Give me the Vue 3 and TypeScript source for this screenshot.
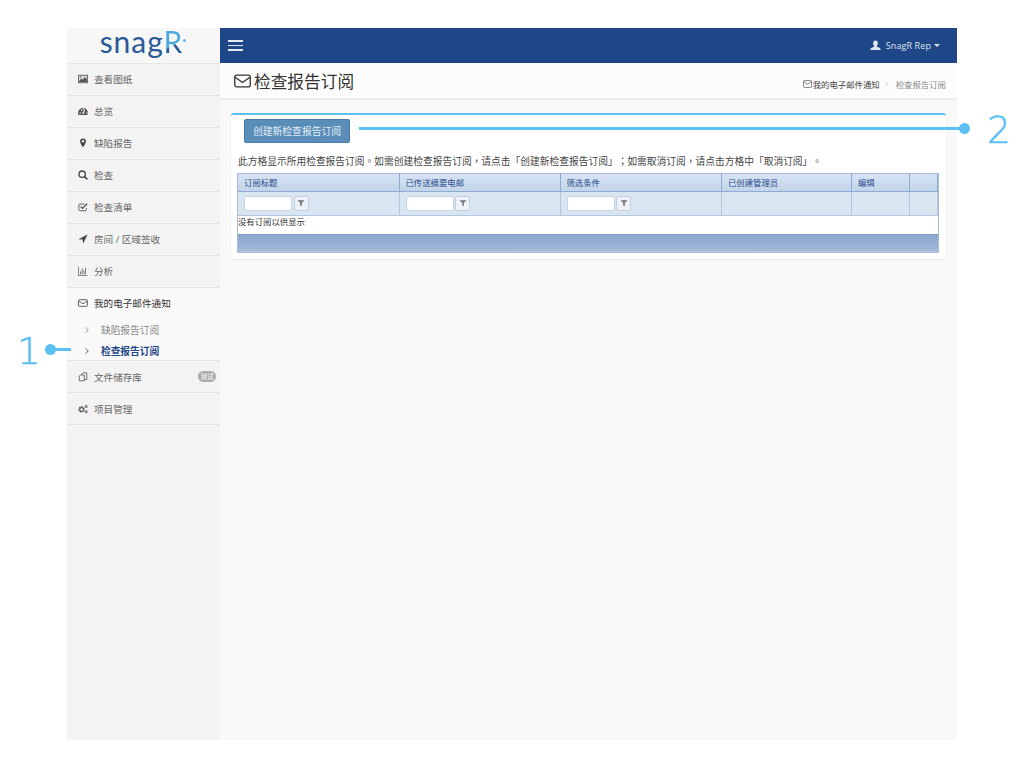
<script setup lang="ts">
const navTop = [
  { label: '查看图纸', icon: 'picture' },
  { label: '总览', icon: 'gauge' },
  { label: '缺陷报告', icon: 'pin' },
  { label: '检查', icon: 'search' },
  { label: '检查清单', icon: 'check' },
  { label: '房间 / 区域签收', icon: 'arrow' },
  { label: '分析', icon: 'chart' }
]

const columns = [
  { title: '订阅标题', width: 161.5, filter: true },
  { title: '已传送摘要电邮', width: 161, filter: true },
  { title: '筛选条件', width: 161.5, filter: true },
  { title: '已创建管理员', width: 130, filter: false },
  { title: '编辑', width: 58, filter: false },
  { title: '', width: 28, filter: false }
]
</script>

<template>
  <div class="page">
    <div class="frame">
      <aside class="sidebar">
        <div class="logo"><span class="logo-main">snag</span><span class="logo-r">R</span><i class="logo-dot"></i></div>
        <div v-for="item in navTop" :key="item.label" class="nav-item raised">
          <svg class="nav-icon" viewBox="0 0 12 12">
            <template v-if="item.icon === 'picture'">
              <rect x="0.500" y="1.500" width="11" height="9" fill="#ddd" stroke="#555" />
              <path d="M1.500 9.500V8l2.500-2.500 1.500 1.500L8.500 3.500l2 2.500v3.500z" fill="#555" />
              <circle cx="3" cy="3.700" r="0.900" fill="#555" />
            </template>
            <path v-else-if="item.icon === 'gauge'" d="M0 8.500a6 6 0 1 1 12 0c0 1-.3 1.700-.7 2.300H.7C.3 10.200 0 9.500 0 8.500zM5.300 8.200a1.100 1.100 0 0 0 1.800 1L8.500 4.300 8 4.100zM1.800 8.500a.8.800 0 1 0 0-.01zM3.500 5a.8.800 0 1 0 0-.01zM5.800 3.800a.8.800 0 1 0 0-.01zM10 8.500a.8.800 0 1 0 0-.01z" fill="#555" fill-rule="evenodd" />
            <path v-else-if="item.icon === 'pin'" d="M6 0.500a3.500 3.500 0 0 0-3.500 3.500C2.500 6.500 6 11.500 6 11.500S9.500 6.500 9.500 4A3.500 3.500 0 0 0 6 0.500zM6 5.500a1.500 1.500 0 1 1 0-3 1.500 1.500 0 0 1 0 3z" fill="#444" fill-rule="evenodd" />
            <template v-else-if="item.icon === 'search'">
              <circle cx="5" cy="5" r="3.800" fill="none" stroke="#444" stroke-width="1.600" />
              <path d="M7.800 7.800l3.400 3.400" stroke="#444" stroke-width="2" />
            </template>
            <template v-else-if="item.icon === 'check'">
              <path d="M10 7v2.200c0 .7-.5 1.300-1.200 1.300H2.200C1.500 10.500 1 10 1 9.200V3.800C1 3 1.500 2.500 2.200 2.500H8" fill="none" stroke="#555" stroke-width="1.100" />
              <path d="M3.200 5.500l2.200 2.200L11 2.200" fill="none" stroke="#555" stroke-width="1.600" />
            </template>
            <path v-else-if="item.icon === 'arrow'" d="M11.500 0.500L0.500 6.200 5.600 6.600l.5 5z" fill="#444" />
            <path v-else d="M0.500 1v10.500h11M3 10V6.500M5 10V3M7 10V5M9 10V2" fill="none" stroke="#555" stroke-width="0.900" />
          </svg>
          <span>{{ item.label }}</span>
        </div>
        <div class="nav-group">
          <div class="group-head">
            <svg class="nav-icon" viewBox="0 0 12 12">
              <rect x="0.700" y="2" width="10.600" height="8" rx="1.300" fill="none" stroke="#444" />
              <path d="M1 3.500l5 3.500 5-3.500" fill="none" stroke="#444" />
            </svg>
            <span>我的电子邮件通知</span>
          </div>
          <div class="sub-item">
            <svg class="chev" viewBox="0 0 4 6"><path d="M0.500 0.500L3.300 3 0.500 5.500" fill="none" stroke="currentColor" stroke-width="0.800" /></svg>
            <span>缺陷报告订阅</span>
          </div>
          <div class="sub-item current">
            <svg class="chev" viewBox="0 0 4 6"><path d="M0.500 0.500L3.300 3 0.500 5.500" fill="none" stroke="currentColor" stroke-width="0.800" /></svg>
            <span>检查报告订阅</span>
          </div>
        </div>
        <div class="nav-item">
          <svg class="nav-icon" viewBox="0 0 12 12">
            <path d="M4.500 3.500V2.500l1.500-1.500h4.500v8H8M1.500 5l1.500-1.500h4.500v7h-6z" fill="none" stroke="#555" />
          </svg>
          <span>文件储存库</span>
          <b class="beta">测试</b>
        </div>
        <div class="nav-item">
          <svg class="nav-icon" viewBox="0 0 12 12">
            <circle cx="4.300" cy="6.500" r="2.600" fill="none" stroke="#444" stroke-width="2.200" stroke-dasharray="1.600 0.500" />
            <circle cx="9.800" cy="3" r="1.300" fill="none" stroke="#555" stroke-width="1.200" />
            <circle cx="9.800" cy="9.300" r="1.300" fill="none" stroke="#555" stroke-width="1.200" />
          </svg>
          <span>项目管理</span>
        </div>
      </aside>

      <main class="content">
        <header class="topbar">
          <div class="burger"><i></i><i></i><i></i></div>
          <div class="user">
            <svg class="user-icon" viewBox="0 0 12 12">
              <path d="M6 0.500c1.700 0 2.600 1.300 2.600 3 0 1.200-.5 2.200-1.100 2.800v1c1 .4 3.400 1 3.900 2v1.500H0.600V9.300c.5-1 2.900-1.600 3.900-2v-1C3.900 5.700 3.400 4.700 3.400 3.500c0-1.700.9-3 2.600-3z" fill="#dfe6f0" />
            </svg>
            <span>SnagR Rep</span>
            <i class="caret"></i>
          </div>
        </header>

        <div class="title-bar">
          <h1>
            <svg class="title-icon" viewBox="0 0 18 14">
              <rect x="0.800" y="0.800" width="16.400" height="12.400" rx="2" fill="none" stroke="#333" stroke-width="1.400" />
              <path d="M1.200 3l7.800 5.500L16.800 3" fill="none" stroke="#333" stroke-width="1.400" />
            </svg>
            <span>检查报告订阅</span>
          </h1>
          <div class="crumbs">
            <svg class="crumb-icon" viewBox="0 0 12 10">
              <rect x="0.500" y="0.500" width="11" height="9" rx="1.300" fill="none" stroke="#444" stroke-width="0.900" />
              <path d="M1 2l5 3.500L11 2" fill="none" stroke="#444" stroke-width="0.900" />
            </svg>
            <span class="crumb-link">我的电子邮件通知</span>
            <span class="crumb-sep">&gt;</span>
            <span class="crumb-now">检查报告订阅</span>
          </div>
        </div>

        <section class="panel">
          <button class="create-btn" type="button">创建新检查报告订阅</button>
          <p class="intro">此方格显示所用检查报告订阅。如需创建检查报告订阅，请点击「创建新检查报告订阅」；如需取消订阅，请点击方格中「取消订阅」。</p>
          <div class="grid">
            <div class="grid-row head">
              <div v-for="col in columns" :key="col.title" class="cell" :style="{ width: col.width + 'px' }">{{ col.title }}</div>
            </div>
            <div class="grid-row filters">
              <div v-for="col in columns" :key="col.title" class="cell" :style="{ width: col.width + 'px' }">
                <template v-if="col.filter">
                  <input class="filter-input" type="text" />
                  <span class="filter-btn">
                    <svg viewBox="0 0 10 10" width="8" height="8"><path d="M0.500 1.500h9L6 5v4L4 8V5z" fill="#777" /></svg>
                  </span>
                </template>
              </div>
            </div>
            <div class="empty">没有订阅以供显示</div>
            <div class="pager"></div>
          </div>
        </section>
      </main>
    </div>

    <div class="callout one"><span class="num">1</span><i class="dot"></i><i class="line"></i></div>
    <div class="callout two"><i class="line"></i><i class="dot"></i><span class="num">2</span></div>
  </div>
</template>

<style>
html, body {
  background: #fff;
}
</style>

<style scoped>
.page {
  position: relative;
  width: 1024px;
  height: 768px;
  padding: 28px 67px;
  box-sizing: border-box;
  overflow: hidden;
  font-family: "Open Sans", "Noto Sans CJK SC", sans-serif;
  color: #555;
}

.frame {
  display: flex;
  width: 890px;
  height: 712px;
  background: #f9f9f9;
}

.sidebar {
  width: 153px;
  flex: none;
  background: #f3f3f3;
}

.logo {
  position: relative;
  height: 36px;
  background: #f7f7f7;
  border-bottom: 1px solid #e6e6e6;
  box-sizing: border-box;
  text-align: center;
  font-family: "Lato", sans-serif;
  font-size: 30px;
  line-height: 27px;
  letter-spacing: 1px;
  padding-right: 4px;
  color: #2a5a98;
}

.logo-r {
  background: linear-gradient(155deg, #4aa8dc 58%, #2a5a98 62%);
  -webkit-background-clip: text;
  background-clip: text;
  color: transparent;
}

.logo-dot {
  position: absolute;
  left: 116px;
  top: 11px;
  width: 3px;
  height: 3px;
  border-radius: 50%;
  background: #5bc0ee;
}

.nav-item {
  position: relative;
  display: flex;
  align-items: center;
  height: 32px;
  box-sizing: border-box;
  padding-left: 11px;
  border-bottom: 1px solid #e4e4e4;
  font-size: 9.6px;
  color: #666;
}

.nav-item.raised {
  padding-bottom: 2px;
}

.nav-icon {
  width: 10px;
  height: 10px;
  margin-right: 6px;
  flex: none;
}

.nav-group {
  height: 73px;
  box-sizing: border-box;
  background: #f9f9f9;
  border-bottom: 1px solid #e4e4e4;
}

.group-head {
  display: flex;
  align-items: center;
  height: 30px;
  padding: 0 0 1px 11px;
  font-size: 9.6px;
  color: #333;
}

.sub-item {
  display: flex;
  align-items: center;
  height: 21px;
  padding-left: 18px;
  font-size: 9.7px;
  color: #888;
}

.chev {
  width: 4px;
  height: 6px;
  margin-right: 12px;
  flex: none;
}

.sub-item.current {
  color: #1f4788;
  font-weight: 700;
}

.beta {
  position: absolute;
  right: 4px;
  top: 10px;
  padding: 0 2.500px;
  height: 11px;
  line-height: 11px;
  border-radius: 6px;
  background: #aaa;
  color: #fff;
  font-size: 6.500px;
  font-weight: 400;
}

.content {
  flex: 1;
  min-width: 0;
}

.topbar {
  display: flex;
  align-items: center;
  justify-content: space-between;
  height: 35px;
  padding: 0 17px 0 8px;
  background: #1f4788;
  color: #dfe6f0;
}

.burger {
  display: flex;
  flex-direction: column;
  gap: 3.200px;
  width: 15px;
}

.burger i {
  display: block;
  height: 1.300px;
  background: #e4eaf3;
}

.user {
  display: flex;
  align-items: center;
  font-size: 9px;
  letter-spacing: 0.100px;
}

.user-icon {
  width: 11px;
  height: 11px;
  margin-right: 5px;
}

.caret {
  margin-left: 3px;
  border-left: 3px solid transparent;
  border-right: 3px solid transparent;
  border-top: 3px solid #dfe6f0;
}

.title-bar {
  display: flex;
  align-items: center;
  justify-content: space-between;
  height: 37px;
  box-sizing: border-box;
  padding: 0 11px 0 14px;
  background: #fcfcfc;
  border-bottom: 2px solid #eee;
}

h1 {
  display: flex;
  align-items: center;
  margin: 0;
  font-size: 16.700px;
  font-weight: 400;
  color: #333;
}

.title-icon {
  width: 17px;
  height: 14px;
  margin-right: 3px;
}

.crumbs {
  display: flex;
  align-items: center;
  padding-top: 7px;
  font-size: 8.400px;
}

.crumb-icon {
  width: 9px;
  height: 8px;
  margin-right: 1px;
}

.crumb-link {
  color: #444;
}

.crumb-sep {
  margin: 0 7px 0 5px;
  color: #ccc;
  font-size: 7px;
}

.crumb-now {
  color: #888;
}

.panel {
  margin: 13px 11px 0;
  height: 146px;
  box-sizing: border-box;
  background: #fff;
  border-top: 2px solid #5fc0ee;
  border-radius: 3px;
  box-shadow: 0 1px 2px rgba(0, 0, 0, 0.08);
  padding: 4px 7px 0 6px;
}

.create-btn {
  display: block;
  width: 106px;
  height: 24px;
  margin-left: 7px;
  padding: 0;
  border: 1px solid #4a7ba6;
  border-radius: 2px;
  background: #5a8db8;
  color: #e4edf5;
  font-family: inherit;
  font-size: 9.800px;
}

.intro {
  margin: 11px 0 0 1px;
  height: 19px;
  line-height: 14px;
  font-family: "Noto Sans CJK TC", sans-serif;
  font-size: 9.740px;
  text-spacing-trim: space-all;
  color: #444;
  white-space: nowrap;
}

.grid {
  border: 1px solid #a8bbd6;
  border-top: 0;
  background: #fff;
  font-size: 8.400px;
  color: #333;
}

.grid-row {
  display: flex;
}

.cell {
  flex: none;
  box-sizing: border-box;
  border-right: 1px solid #b4c6de;
}

.head .cell {
  height: 19px;
  line-height: 18px;
  padding-left: 6px;
  color: #2a4a8a;
  background: linear-gradient(#d6e3f4, #c3d4ea);
  border-top: 1px solid #a8bbd6;
  border-bottom: 1px solid #8facd4;
  border-right-color: #8facd4;
}

.filters .cell {
  display: flex;
  align-items: center;
  gap: 1.500px;
  height: 24px;
  padding: 0 0 1px 6px;
  background: #dae5f2;
  border-bottom: 1px solid #b4c6de;
}

.filter-input {
  width: 48px;
  height: 15px;
  box-sizing: border-box;
  padding: 0;
  border: 1px solid #c6d4e6;
  border-radius: 2px;
  background: #fff;
}

.filter-btn {
  display: flex;
  align-items: center;
  justify-content: center;
  width: 15px;
  height: 15px;
  border: 1px solid #c0cfe2;
  border-radius: 2px;
  box-sizing: border-box;
  background: #eef2f8;
}

.empty {
  height: 18px;
  line-height: 12px;
  color: #333;
}

.pager {
  height: 18px;
  box-sizing: border-box;
  background: linear-gradient(#8ea7cf, #a3b8d8);
  border-top: 1px solid #7f9bc6;
  border-bottom: 1px solid #b6c7de;
}

.callout {
  position: absolute;
  display: flex;
  align-items: center;
  color: #5cc0f5;
}

.num {
  margin-top: 6px;
  font-family: "DejaVu Sans", sans-serif;
  font-size: 37px;
  font-weight: 200;
  line-height: 40px;
  -webkit-text-stroke: 0.600px #5cc0f5;
}

.dot {
  width: 11px;
  height: 11px;
  border-radius: 50%;
  background: #5cc0f5;
  flex: none;
}

.line {
  height: 3px;
  background: #5cc0f5;
  flex: none;
}

.one {
  left: 17px;
  top: 326px;
}

.one .num {
  width: 28px;
}

.one .line {
  width: 17px;
  margin-left: -2px;
}

.two {
  left: 359px;
  top: 105px;
}

.two .line {
  width: 602px;
}

.two .dot {
  margin-left: -2px;
}

.two .num {
  margin-left: 17px;
}
</style>
